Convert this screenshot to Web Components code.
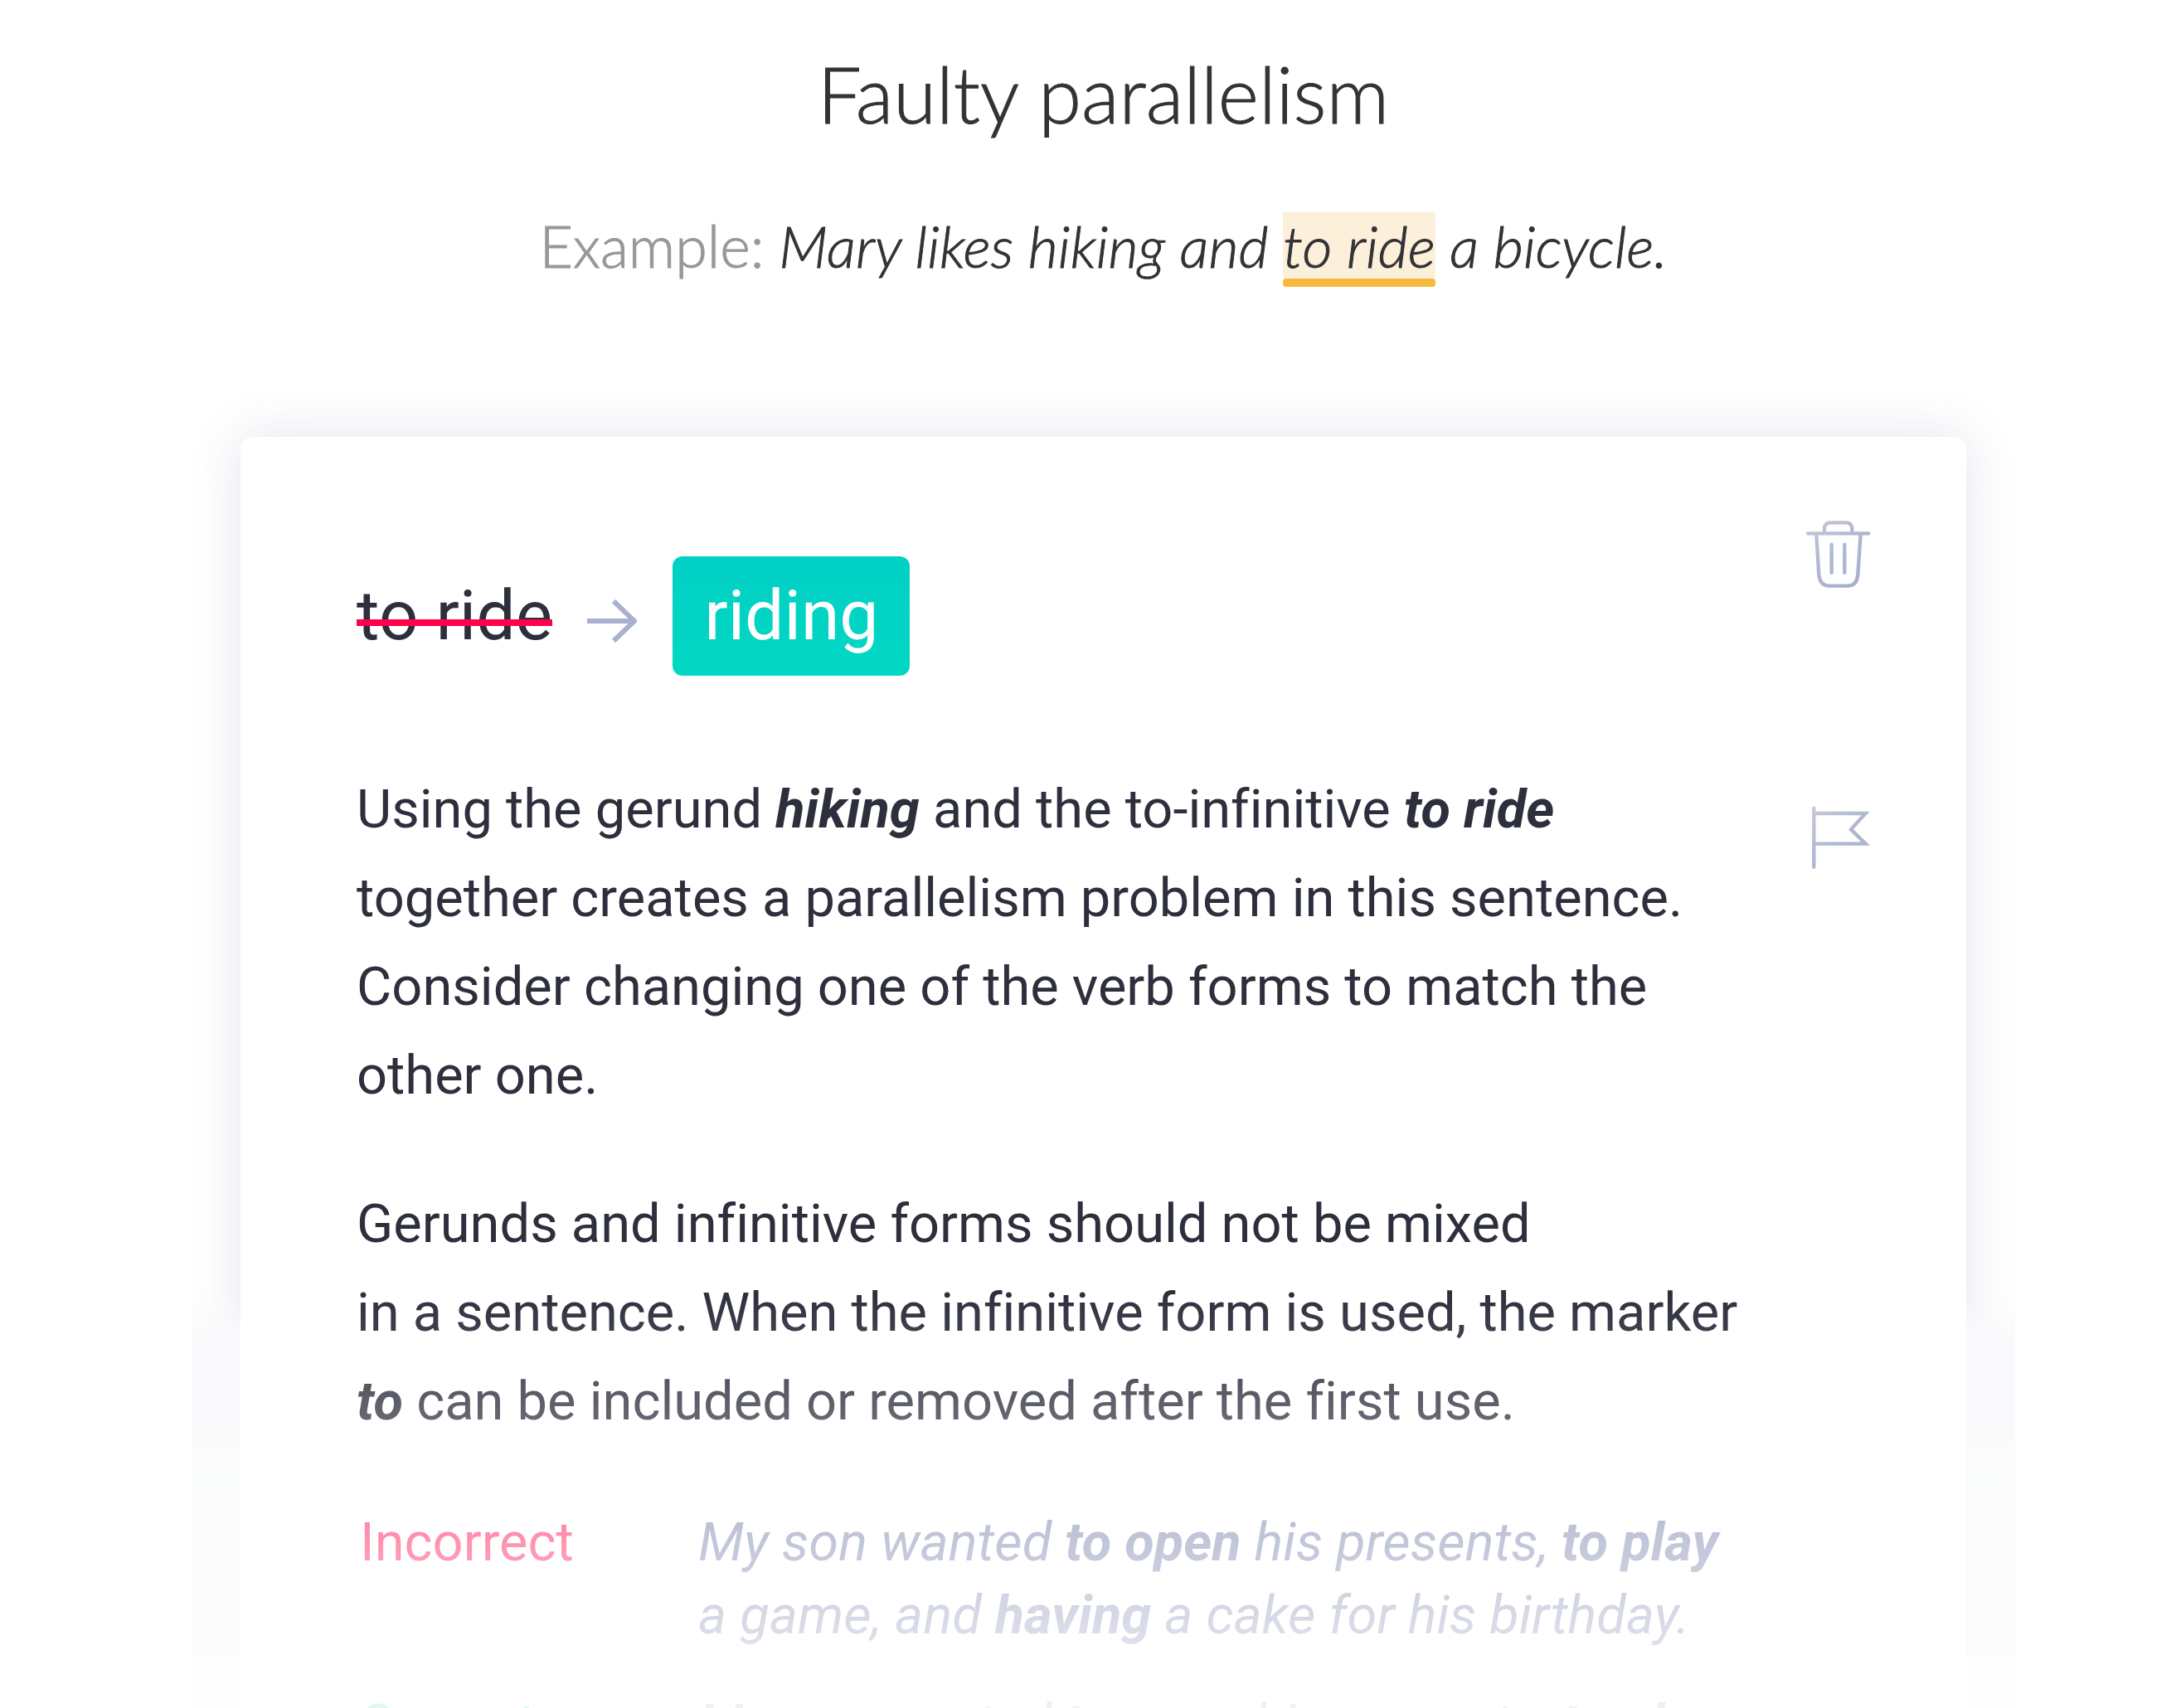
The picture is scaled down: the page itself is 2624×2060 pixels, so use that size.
<!DOCTYPE html>
<html lang="en">
<head>
<meta charset="utf-8">
<title>Faulty parallelism</title>
<style>
  body { margin: 0; background: #fff; }
</style>
</head>
<body>
<lesson-page>
  <span slot="title">Faulty parallelism</span>
  <example-line slot="example" label="Example:">Mary likes hiking and <flagged-phrase>to ride</flagged-phrase> a bicycle.</example-line>
  <suggestion-card>
    <word-replacement slot="head" from="to ride" to="riding"></word-replacement>
    <explanation-text>Using the gerund <b>hiking</b> and the to-infinitive <b>to ride</b><br>together creates a parallelism problem in this sentence.<br>Consider changing one of the verb forms to match the<br>other one.</explanation-text>
    <explanation-text>Gerunds and infinitive forms should not be mixed<br>in a sentence. When the infinitive form is used, the marker<br><b>to</b> can be included or removed after the first use.</explanation-text>
    <usage-examples></usage-examples>
  </suggestion-card>
</lesson-page>

<script>
class BaseElement extends HTMLElement {
  connectedCallback() {
    if (this.shadowRoot) return;
    this.attachShadow({ mode: 'open' }).innerHTML = this.render();
  }
}

customElements.define('lesson-page', class extends BaseElement {
  render() {
    return `<style>
      :host { display: flex; flex-direction: column; box-sizing: border-box; height: 100vh; padding: 57px 194px 0 231px; overflow: hidden; color: #323337; font-family: Lato, sans-serif; font-weight: 300; }
      header { display: flex; flex-direction: column; gap: 85px; text-align: center; -webkit-text-stroke: 1px; }
      h1 { margin: 0; font-size: 94px; line-height: 112px; font-weight: 300; }
      main { position: relative; flex: 1; min-height: 0; margin-top: 126px; padding: 63px 59px 0; overflow: hidden; }
      /* pale margins either side of the lower part of the card */
      main::before, main::after { content: ""; position: absolute; z-index: 1; top: 0; bottom: 0; width: 59px; background: linear-gradient(#fafafc00 1095px, #fafafc 1150px, #fafafc 1260px, #fbfcfc 1310px, #fcfcfd 1535px, #fefefe 1536px); }
      main::before { left: 0; }
      main::after { right: 0; }
    </style>
    <header><h1><slot name="title"></slot></h1><slot name="example"></slot></header>
    <main><slot></slot></main>`;
  }
});

customElements.define('example-line', class extends BaseElement {
  render() {
    return `<style>
      :host { display: block; font-size: 70px; line-height: 84px; font-style: italic; }
      .label { font-style: normal; color: #98989b; }
    </style><span class="label">${this.getAttribute('label')}</span> <slot></slot>`;
  }
});

customElements.define('flagged-phrase', class extends BaseElement {
  render() {
    return `<style>
      :host { display: inline-block; position: relative; line-height: 80px; background: #fdf0da; }
      :host::after { content: ""; position: absolute; left: 0; right: 0; top: 100%; height: 10px; border-radius: 4px; background: #f6b93f; }
    </style><slot></slot>`;
  }
});

customElements.define('suggestion-card', class extends BaseElement {
  render() {
    return `<style>
      :host { display: block; border-radius: 14px; background: #fff; box-shadow: 0 0 64px rgba(60, 70, 130, .14); color: #2d2f3d; font-family: Roboto, sans-serif; font-size: 65px; font-weight: 400; font-variant-ligatures: none; }
      .fade { display: flex; padding-left: 140px; padding-right: 116px; -webkit-mask-image: linear-gradient(#000 1033px, transparent 1600px); mask-image: linear-gradient(#000 1033px, transparent 1600px); }
      article { flex: 1; min-width: 0; display: flex; flex-direction: column; gap: 72px; padding-top: 144px; white-space: nowrap; }
      ::slotted([slot="head"]) { margin-bottom: 36px; }
      aside { display: flex; flex-direction: column; gap: 262px; padding-top: 101px; }
    </style>
    <div class="fade">
      <article><slot name="head"></slot><slot></slot></article>
      <aside><tool-button kind="trash" label="Dismiss"></tool-button><tool-button kind="flag" label="Report"></tool-button></aside>
    </div>`;
  }
});

customElements.define('word-replacement', class extends BaseElement {
  render() {
    return `<style>
      :host { display: flex; align-items: center; font-size: 84px; line-height: 144px; }
      del { position: relative; text-decoration: none; }
      del::after { content: ""; position: absolute; left: 0; right: 0; top: 76px; height: 8px; background: #ff004c; }
      svg { width: 60px; height: 52px; margin: 12px 43px 0 42px; }
      button { height: 144px; padding: 0 38px; border: 0; border-radius: 12px; background: linear-gradient(#01d0c5, #02d7c3); color: #fff; font: inherit; line-height: 144px; }
    </style>
    <del>${this.getAttribute('from')}</del>
    <svg viewBox="0 0 60 52" fill="none" stroke="#a9b1ce" stroke-width="6" aria-hidden="true"><path d="M0 26H56M32 2L57 26L32 50"/></svg>
    <button type="button">${this.getAttribute('to')}</button>`;
  }
});

customElements.define('explanation-text', class extends BaseElement {
  render() {
    return `<style>
      :host { display: block; line-height: 107px; }
      ::slotted(b) { font-style: italic; font-weight: 700; }
    </style><slot></slot>`;
  }
});

customElements.define('usage-examples', class extends BaseElement {
  render() {
    return `<style>
      :host { display: block; }
      table { border-collapse: collapse; line-height: 88px; }
      th, td { padding: 0 0 43px; text-align: left; vertical-align: top; }
      th { width: 408px; padding-left: 4px; font-weight: 400; }
      td { font-style: italic; color: #7d86ae; }
      .bad { color: #ff1a56; }
      .good { color: #02c9a0; }
    </style>
    <table>
      <tr><th class="bad" scope="row">Incorrect</th><td>My son wanted <b>to open</b> his presents, <b>to play</b><br>a game, and <b>having</b> a cake for his birthday.</td></tr>
      <tr><th class="good" scope="row">Correct</th><td>My son wanted <b>to open</b> his presents, <b>to play</b></td></tr>
    </table>`;
  }
});

const ICONS = {
  trash: ['87 84 228 240', '<path d="M150 128V114Q150 91 173 91H227Q250 91 250 114V128M90 130H310M121 132L130 280Q134 320 168 320H234Q267 320 271 280L281 132M176 170V272M223 170V272"/>'],
  flag: ['87 61 228 240', '<path d="M112 75V288M112 94H299L246 152L299 204H112"/>']
};

customElements.define('tool-button', class extends BaseElement {
  render() {
    const [box, paths] = ICONS[this.getAttribute('kind')];
    return `<style>
      :host { display: block; }
      button { display: block; padding: 0; border: 0; background: none; }
      svg { display: block; width: 76px; height: 80px; overflow: visible; }
    </style>
    <button type="button" aria-label="${this.getAttribute('label')}"><svg viewBox="${box}" fill="none" stroke="url(#tint)" stroke-width="13" stroke-linecap="round"><defs><linearGradient id="tint" gradientUnits="userSpaceOnUse" x1="100" y1="80" x2="290" y2="310"><stop offset="0" stop-color="#c5c8d8"/><stop offset=".5" stop-color="#b0b7d2"/><stop offset="1" stop-color="#a6aecb"/></linearGradient></defs>${paths}</svg></button>`;
  }
});
</script>
</body>
</html>
